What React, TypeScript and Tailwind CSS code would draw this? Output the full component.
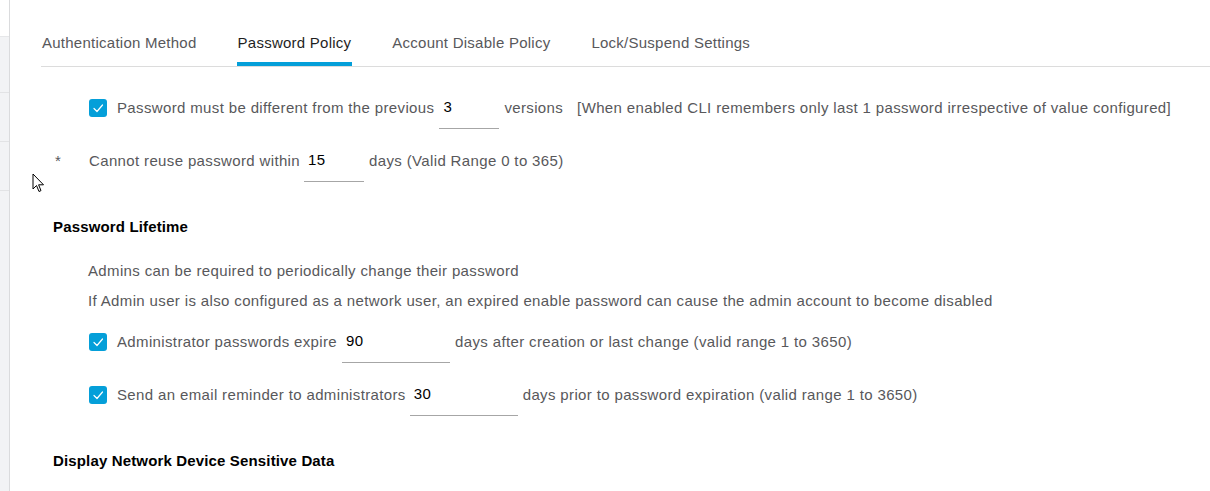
import React from 'react';

const font = { fontFamily: '"Liberation Sans", Arial, sans-serif' };

function CheckBox() {
  return (
    <span className="w-[18px] h-[18px] shrink-0 rounded-[3px] bg-[#049fd9] flex items-center justify-center">
      <svg width="12" height="12" viewBox="0 0 12 12" fill="none">
        <polyline points="2,6.5 5,9.5 10.5,3" stroke="#ffffff" strokeWidth="1.2" strokeLinecap="round" strokeLinejoin="round" />
      </svg>
    </span>
  );
}

function Field({ value, width }: { value: string; width: string }) {
  return (
    <span className={`${width} h-[42px] shrink-0 border-b border-[#a6a6a6] flex items-center pl-[4px] text-black`}>
      {value}
    </span>
  );
}

function Cursor() {
  return (
    <svg className="absolute left-[32px] top-[173px]" width="14" height="21" viewBox="0 0 14 21">
      <path d="M1 1 L1 16 L4.5 12.5 L7 18.5 L9 17.6 L6.6 11.8 L11.5 11.8 Z" fill="#ffffff" stroke="#000000" strokeWidth="1" strokeLinejoin="miter" />
    </svg>
  );
}

const tabs = ['Authentication Method', 'Password Policy', 'Account Disable Policy', 'Lock/Suspend Settings'];

export default function App() {
  return (
    <div className="relative w-[1210px] h-[491px] overflow-hidden bg-white flex text-[15px] tracking-[0.36px] text-[#58585b]" style={font}>
      {/* left nav strip */}
      <div className="w-[10px] shrink-0 bg-[#f2f3f5] border-r border-[#dadbdd] flex flex-col">
        <div className="h-[37px] bg-white border-b border-[#e6e7e9]" />
        <div className="h-[56px] border-b border-[#e2e3e5]" />
        <div className="h-[49px] border-b border-[#e2e3e5]" />
        <div className="h-[49px] border-b border-[#e2e3e5]" />
      </div>

      <div className="flex-1 pl-[31px]">
        {/* tabs */}
        <div className="h-[67px] flex gap-[41px] pl-[1px] border-b border-[#dcdcdc] text-[15px] tracking-[0.25px]">
          {tabs.map((t, i) => (
            <div
              key={t}
              className={
                i === 1
                  ? 'pt-[33px] pb-[8px] leading-[20px] h-[66px] border-b-4 border-[#049fd9] text-[#1f1f1f] -mx-[1px] px-[1px]'
                  : 'pt-[33px] leading-[20px] text-[#58585b]'
              }
            >
              {t}
            </div>
          ))}
        </div>

        {/* previous versions */}
        <div className="mt-[20px] ml-[48px] h-[42px] flex items-center">
          <CheckBox />
          <span className="ml-[10px]">Password must be different from the previous</span>
          <span className="ml-[5px]"><Field value="3" width="w-[60px]" /></span>
          <span className="ml-[5px]">versions</span>
          <span className="ml-[14px]">[When enabled CLI remembers only last 1 password irrespective of value configured]</span>
        </div>

        {/* reuse */}
        <div className="mt-[11px] ml-[14px] h-[42px] flex items-center">
          <span className="w-[34px]">*</span>
          <span>Cannot reuse password within</span>
          <span className="ml-[4px]"><Field value="15" width="w-[60px]" /></span>
          <span className="ml-[5px]">days (Valid Range 0 to 365)</span>
        </div>

        <div className="mt-[35px] ml-[12px] leading-[20px] text-[15px] tracking-[0.15px] font-bold text-black">Password Lifetime</div>

        <div className="mt-[24px] ml-[47px] leading-[20px]">Admins can be required to periodically change their password</div>
        <div className="mt-[10px] ml-[47px] leading-[20px]">
          If Admin user is also configured as a network user, an expired enable password can cause the admin account to become disabled
        </div>

        <div className="mt-[10px] ml-[48px] h-[42px] flex items-center">
          <CheckBox />
          <span className="ml-[10px]">Administrator passwords expire</span>
          <span className="ml-[5px]"><Field value="90" width="w-[108px]" /></span>
          <span className="ml-[5px]">days after creation or last change (valid range 1 to 3650)</span>
        </div>

        <div className="mt-[11px] ml-[48px] h-[42px] flex items-center">
          <CheckBox />
          <span className="ml-[10px]">Send an email reminder to administrators</span>
          <span className="ml-[4px]"><Field value="30" width="w-[108px]" /></span>
          <span className="ml-[5px]">days prior to password expiration (valid range 1 to 3650)</span>
        </div>

        <div className="mt-[35px] ml-[12px] leading-[20px] text-[15px] tracking-[0.15px] font-bold text-black">Display Network Device Sensitive Data</div>
      </div>

      <Cursor />
    </div>
  );
}
